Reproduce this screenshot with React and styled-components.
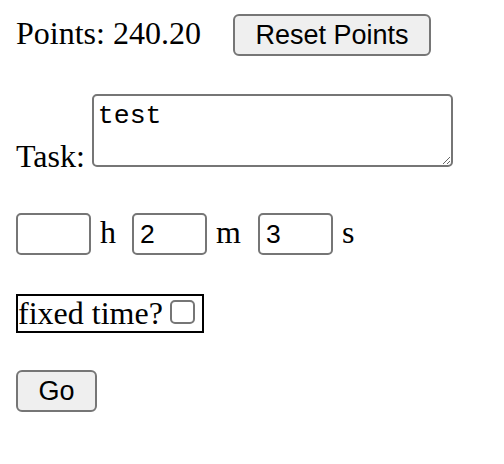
import React, { useState } from 'react';
import styled, { createGlobalStyle } from 'styled-components';

const GlobalStyle = createGlobalStyle`
  body {
    margin: 0;
    background: #fff;
    color: #000;
    font-family: "Liberation Serif", "Times New Roman", serif;
    font-size: 32px;
  }
`;

const Page = styled.div`
  display: flex;
  flex-direction: column;
  align-items: flex-start;
  padding: 14px 16px;
`;

const Row = styled.div`
  display: flex;
  align-items: ${(p) => p.align || 'baseline'};
  margin-top: ${(p) => p.top || 0}px;
`;

const Text = styled.span`
  line-height: normal;
  white-space: pre;
`;

const TaskLabel = styled.label`
  line-height: 32px;
  margin: 0 7px -5px 0;
`;

const Button = styled.button`
  height: 42px;
  margin-left: ${(p) => p.left || 0}px;
  padding: 0 20.5px;
  border: 2px solid #767676;
  border-radius: 6px;
  background: #efefef;
  color: #000;
  font-family: "Liberation Sans", Arial, sans-serif;
  font-size: 27px;
`;

const TaskArea = styled.textarea`
  box-sizing: border-box;
  width: 361px;
  height: 73px;
  margin: 0;
  padding: 5px 4px;
  border: 2px solid #767676;
  border-radius: 5px;
  font-family: "Liberation Mono", "Courier New", monospace;
  font-size: 26.5px;
  color: #000;
`;

const TimeInput = styled.input`
  box-sizing: border-box;
  width: 75px;
  height: 42px;
  margin: 0;
  padding: 0 6px;
  border: 2px solid #767676;
  border-radius: 5px;
  font-family: "Liberation Sans", Arial, sans-serif;
  font-size: 26.5px;
  color: #000;
`;

const Unit = styled.span`
  margin: 0 ${(p) => p.after || 0}px 0 9px;
  line-height: normal;
`;

const FixedBox = styled.label`
  display: flex;
  align-items: flex-start;
  border: 2px solid #000;
  padding: 0 7px 0 0;
  line-height: 35px;
`;

const Check = styled.input`
  appearance: none;
  box-sizing: border-box;
  width: 25px;
  height: 24px;
  margin: 4px 0 0 7px;
  border: 2px solid #767676;
  border-radius: 5px;
  background: #fff;
`;

const App = () => {
  const [task, setTask] = useState('test');
  const [hours, setHours] = useState('');
  const [minutes, setMinutes] = useState('2');
  const [seconds, setSeconds] = useState('3');
  const [fixed, setFixed] = useState(false);

  return (
    <>
      <GlobalStyle />
      <Page>
        <Row>
          <Text>Points: 240.20</Text>
          <Button left={32}>Reset Points</Button>
        </Row>
        <Row align="flex-end" top={38}>
          <TaskLabel>Task:</TaskLabel>
          <TaskArea value={task} onChange={(e) => setTask(e.target.value)} />
        </Row>
        <Row top={46}>
          <TimeInput value={hours} onChange={(e) => setHours(e.target.value)} />
          <Unit after={16}>h</Unit>
          <TimeInput value={minutes} onChange={(e) => setMinutes(e.target.value)} />
          <Unit after={17}>m</Unit>
          <TimeInput value={seconds} onChange={(e) => setSeconds(e.target.value)} />
          <Unit>s</Unit>
        </Row>
        <Row top={39}>
          <FixedBox>
            <span>fixed time?</span>
            <Check type="checkbox" checked={fixed} onChange={(e) => setFixed(e.target.checked)} />
          </FixedBox>
        </Row>
        <Row top={37}>
          <Button>Go</Button>
        </Row>
      </Page>
    </>
  );
};

export default App;
